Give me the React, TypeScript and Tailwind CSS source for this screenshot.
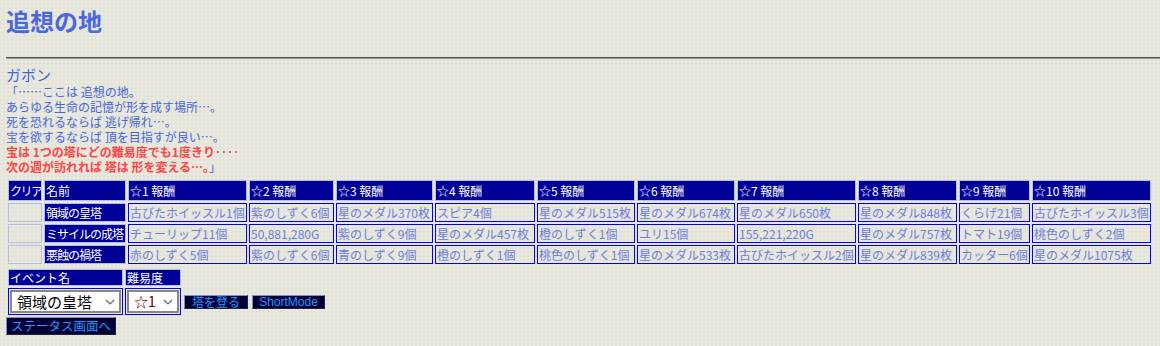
import React from 'react';

const COLS = [
  'w-[34px]', 'w-[82px]', 'w-[119px]', 'w-[85px]', 'w-[97px]', 'w-[100px]',
  'w-[98px]', 'w-[98px]', 'w-[119px]', 'w-[99px]', 'w-[71px]', 'w-[119px]',
];

const TOWERS = [
  {
    name: '領域の皇塔',
    items: ['古びたホイッスル1個', '紫のしずく6個', '星のメダル370枚', 'スピア4個', '星のメダル515枚', '星のメダル674枚', '星のメダル650枚', '星のメダル848枚', 'くらげ21個', '古びたホイッスル3個'],
  },
  {
    name: 'ミサイルの成塔',
    items: ['チューリップ11個', '50,881,280G', '紫のしずく9個', '星のメダル457枚', '橙のしずく1個', 'ユリ15個', '155,221,220G', '星のメダル757枚', 'トマト19個', '桃色のしずく2個'],
  },
  {
    name: '悪蝕の禍塔',
    items: ['赤のしずく5個', '紫のしずく6個', '青のしずく9個', '橙のしずく1個', '桃色のしずく1個', '星のメダル533枚', '古びたホイッスル2個', '星のメダル839枚', 'カッター6個', '星のメダル1075枚'],
  },
];

const Chevron = () => (
  <svg width="10" height="6" viewBox="0 0 10 6" className="pointer-events-none absolute right-[6px] top-1/2 -translate-y-1/2">
    <path d="M1 1 L5 5 L9 1" fill="none" stroke="#666" strokeWidth="1.2" />
  </svg>
);

export default function App() {
  return (
    <div className="min-h-[346px] bg-[#e5e4d8] bg-[radial-gradient(circle,#eeede5_0.7px,transparent_0.9px)] bg-[length:4px_4px] font-['Noto_Sans_CJK_JP',sans-serif] text-[#4466dd] pt-[6px] pb-[8px]">
      {/* Title */}
      <h1 className="pl-[6px] text-[24px] leading-[30px] font-bold text-[#4a68e0]">追想の地</h1>
      <div className="ml-[6px] mt-[21px] border-t border-t-[#555] border-b border-b-[#999]" />

      {/* Dialogue */}
      <div className="pl-[6px] mt-[6px]">
        <div className="text-[15px] leading-[19px]">ガボン</div>
        <div className="text-[12px] leading-[15px]">
          <p>「……ここは 追想の地。</p>
          <p>あらゆる生命の記憶が形を成す場所…。</p>
          <p>死を恐れるならば 逃げ帰れ…。</p>
          <p>宝を欲するならば 頂を目指すが良い…。</p>
          <p className="font-bold text-[#ff4444]">宝は 1つの塔にどの難易度でも1度きり‥‥</p>
          <p>
            <span className="font-bold text-[#ff4444]">次の週が訪れれば 塔は 形を変える…。</span>
            <span>」</span>
          </p>
        </div>
      </div>

      {/* Reward table */}
      <table className="mt-[4px] ml-[6px] table-fixed border-separate border-spacing-[2px] w-[1147px] text-[12px] leading-[15px]">
        <thead>
          <tr>
            {['クリア', '名前', '☆1 報酬', '☆2 報酬', '☆3 報酬', '☆4 報酬', '☆5 報酬', '☆6 報酬', '☆7 報酬', '☆8 報酬', '☆9 報酬', '☆10 報酬'].map((h, i) => (
              <th
                key={h}
                className={`${COLS[i]} h-[21px] bg-[#000099] border border-[#b4bce8] px-[1px] text-left font-normal text-white whitespace-nowrap overflow-hidden ${i === 0 ? 'tracking-[-1.5px]' : ''}`}
              >
                {h}
              </th>
            ))}
          </tr>
        </thead>
        <tbody>
          {TOWERS.map((t) => (
            <tr key={t.name}>
              <td className="h-[19px] border border-[#b4bce8]" />
              <td className="h-[19px] bg-[#000099] border border-[#b4bce8] px-[1px] text-white whitespace-nowrap overflow-hidden tracking-[-1px]">
                {t.name}
              </td>
              {t.items.map((it, i) => (
                <td key={i} className="h-[19px] border border-[#0000ff] px-[1px] text-[#6a7de0] whitespace-nowrap overflow-hidden">
                  {it}
                </td>
              ))}
            </tr>
          ))}
        </tbody>
      </table>

      {/* Event form */}
      <table className="ml-[6px] mt-[1px] border-separate border-spacing-[2px] text-[12px] leading-[15px]">
        <tbody>
          <tr>
            <td className="w-[115px] h-[17px] bg-[#000099] border border-[#b4bce8] px-[1px] text-white">イベント名</td>
            <td className="w-[56px] h-[17px] bg-[#000099] border border-[#b4bce8] px-[1px] text-white">難易度</td>
            <td />
          </tr>
          <tr>
            <td className="border border-[#0000ff] p-[1px]">
              <div className="relative">
                <select className="appearance-none block w-[111px] h-[23px] bg-white border-2 border-[#888] pl-[5px] text-[15px] leading-[19px] text-black outline-none">
                  <option>領域の皇塔</option>
                  <option>ミサイルの成塔</option>
                  <option>悪蝕の禍塔</option>
                </select>
                <Chevron />
              </div>
            </td>
            <td className="border border-[#0000ff] p-[1px]">
              <div className="relative">
                <select className="appearance-none block w-[52px] h-[23px] bg-white border-2 border-[#888] pl-[5px] text-[14px] leading-[19px] text-[#660000] outline-none">
                  <option>☆1</option>
                  <option>☆2</option>
                  <option>☆3</option>
                </select>
                <Chevron />
              </div>
            </td>
            <td className="align-middle pl-[1px]">
              <div className="flex gap-[4px]">
                <button className="w-[64px] h-[14px] bg-[#000033] border border-[#8888cc] border-r-[#222244] border-b-[#222244] text-[12px] leading-[12px] text-[#2299ff]">
                  塔を登る
                </button>
                <button className="w-[73px] h-[14px] bg-[#000033] border border-[#8888cc] border-r-[#222244] border-b-[#222244] text-[12px] leading-[12px] text-[#2299ff] font-['Liberation_Sans',sans-serif]">
                  ShortMode
                </button>
              </div>
            </td>
          </tr>
        </tbody>
      </table>

      <button className="block ml-[6px] w-[110px] h-[18px] bg-[#000033] border border-[#8888cc] border-r-[#222244] border-b-[#222244] text-[12.5px] leading-[14px] text-[#2299ff]">
        ステータス画面へ
      </button>
    </div>
  );
}
